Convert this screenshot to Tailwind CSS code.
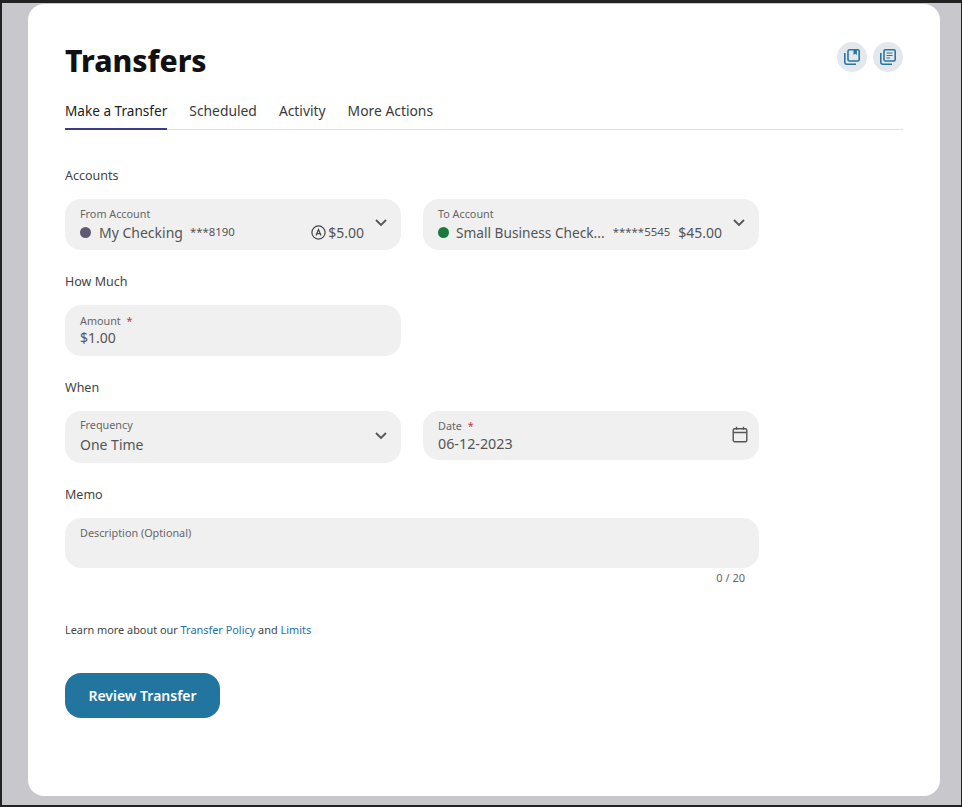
<!DOCTYPE html>
<html lang="en">
<head>
    <meta charset="UTF-8">
    <meta name="viewport" content="width=device-width, initial-scale=1.0">
    <title>Transfers</title>
    <script src="https://cdn.jsdelivr.net/npm/@tailwindcss/browser@4"></script>
</head>
<body class="bg-[#c8c8cc]">
    <div class="w-[962px] h-[807px] overflow-hidden border-t-[3px] border-l-2 border-r border-b-2 border-[#222] font-['Noto_Sans','Open_Sans',sans-serif] text-[#444]">
        <!-- Card -->
        <main class="ml-[26px] mt-[1px] w-[912px] h-[792px] bg-white rounded-[16px] pl-[37px] pr-[37px]">
            <!-- Header -->
            <header class="flex items-start justify-between h-[88px] pt-[37px]">
                <h1 class="text-[30px] leading-[40px] font-extrabold text-[#111]">Transfers</h1>
                <div class="flex gap-[6px] mt-[1px]">
                    <button class="w-[30px] h-[30px] rounded-full bg-[#e3e8ec] flex items-center justify-center text-[#2a769f]">
                        <svg class="w-[18px] h-[18px]" viewBox="0 0 18 18" fill="none" stroke="currentColor" stroke-width="1.6">
                            <rect x="5" y="1.8" width="11.2" height="11.2" rx="1.4"/>
                            <path d="M1.8 5v9.2a2 2 0 0 0 2 2H13"/>
                            <path d="M10.5 2v5l1.7-1.2L13.9 7V2z" fill="currentColor" stroke="none"/>
                        </svg>
                    </button>
                    <button class="w-[30px] h-[30px] rounded-full bg-[#e3e8ec] flex items-center justify-center text-[#2a769f]">
                        <svg class="w-[18px] h-[18px]" viewBox="0 0 18 18" fill="none" stroke="currentColor" stroke-width="1.6">
                            <rect x="5" y="1.8" width="11.2" height="11.2" rx="1.4"/>
                            <path d="M1.8 5v9.2a2 2 0 0 0 2 2H13"/>
                            <path d="M7.5 5h6M7.5 7.5h6M7.5 10h3.5" stroke-width="1.2"/>
                        </svg>
                    </button>
                </div>
            </header>

            <!-- Tabs -->
            <nav class="flex gap-[22px] h-[38px] border-b border-[#dfe1e4] text-[13.85px] leading-[37px] text-[#3a3a3a]">
                <a class="h-[38px] border-b-2 border-[#3b3a8c] text-[13.6px] text-[#222]">Make a Transfer</a>
                <a>Scheduled</a>
                <a>Activity</a>
                <a>More Actions</a>
            </nav>

            <form class="w-[694px]">
                <h2 class="mt-[36px] h-[20px] text-[12.5px] leading-[20px]">Accounts</h2>
                <div class="mt-[13px] grid grid-cols-2 gap-[22px]">
                    <div class="relative h-[51px] rounded-[16px] bg-[#f0f0f0] pl-[15px] pr-[37px] pt-[8px]">
                        <div class="text-[10.8px] leading-[14px] text-[#666]">From Account</div>
                        <div class="flex items-center h-[22px] text-[14px] text-[#555]">
                            <span class="w-[11px] h-[11px] rounded-full bg-[#5f5a72] mr-[8px]"></span>
                            <span>My Checking</span>
                            <span class="ml-[7px] text-[11.4px]">***8190</span>
                            <svg class="ml-auto mr-[2px] w-[15px] h-[15px]" viewBox="0 0 15 15" fill="none" stroke="#444" stroke-width="1.2">
                                <circle cx="7.5" cy="7.5" r="6.6"/>
                                <path d="M5 10.5l2.5-6 2.5 6M5.9 8.6h3.2"/>
                            </svg>
                            <span>$5.00</span>
                        </div>
                        <svg class="absolute right-[13px] top-[19px] w-[14px] h-[10px]" viewBox="0 0 14 10" fill="none" stroke="#555" stroke-width="1.8"><path d="M2 2l5 5 5-5"/></svg>
                    </div>
                    <div class="relative h-[51px] rounded-[16px] bg-[#f0f0f0] pl-[15px] pr-[37px] pt-[8px]">
                        <div class="text-[10.8px] leading-[14px] text-[#666]">To Account</div>
                        <div class="flex items-center h-[22px] text-[14px] text-[#555]">
                            <span class="w-[11px] h-[11px] rounded-full bg-[#1a7a3e] mr-[7px]"></span>
                            <span class="mt-[2px] text-[13.7px]">Small Business Check...</span>
                            <span class="ml-auto text-[11.4px]">*****5545</span>
                            <span class="ml-[8px]">$45.00</span>
                        </div>
                        <svg class="absolute right-[13px] top-[19px] w-[14px] h-[10px]" viewBox="0 0 14 10" fill="none" stroke="#555" stroke-width="1.8"><path d="M2 2l5 5 5-5"/></svg>
                    </div>
                </div>

                <h2 class="mt-[22px] h-[20px] text-[12.5px] leading-[20px]">How Much</h2>
                <div class="mt-[13px] w-[336px] h-[51px] rounded-[16px] bg-[#f0f0f0] pl-[15px] pt-[9px]">
                    <div class="text-[10.8px] leading-[14px] text-[#666]">Amount <span class="ml-[3px] text-[#c8324b]">*</span></div>
                    <div class="h-[20px] text-[14px] leading-[20px] text-[#555]">$1.00</div>
                </div>

                <h2 class="mt-[22px] h-[20px] text-[12.5px] leading-[20px]">When</h2>
                <div class="mt-[13px] grid grid-cols-2 gap-[22px] items-start">
                    <div class="relative h-[52px] rounded-[16px] bg-[#f0f0f0] pl-[15px] pt-[7px]">
                        <div class="text-[10.8px] leading-[14px] text-[#666]">Frequency</div>
                        <div class="mt-[1px] h-[24px] text-[14px] leading-[24px] text-[#555]">One Time</div>
                        <svg class="absolute right-[13px] top-[20px] w-[14px] h-[10px]" viewBox="0 0 14 10" fill="none" stroke="#555" stroke-width="1.8"><path d="M2 2l5 5 5-5"/></svg>
                    </div>
                    <div class="relative h-[49px] rounded-[16px] bg-[#f0f0f0] pl-[15px] pt-[8px]">
                        <div class="text-[10.8px] leading-[14px] text-[#666]">Date <span class="ml-[3px] text-[#c8324b]">*</span></div>
                        <div class="h-[22px] text-[14.3px] leading-[22px] text-[#555]">06-12-2023</div>
                        <svg class="absolute right-[11px] top-[15px] w-[16px] h-[17px]" viewBox="0 0 16 17" fill="none" stroke="#555" stroke-width="1.4">
                            <rect x="1.2" y="2.7" width="13.6" height="13" rx="1.5"/>
                            <path d="M1.2 6.5h13.6M4.5 .8v3M11.5 .8v3"/>
                        </svg>
                    </div>
                </div>

                <h2 class="mt-[22px] h-[20px] text-[12.5px] leading-[20px]">Memo</h2>
                <div class="mt-[13px] h-[50px] rounded-[16px] bg-[#f0f0f0] pl-[15px] pt-[8px]">
                    <div class="text-[10.8px] leading-[14px] text-[#666]">Description (Optional)</div>
                </div>
                <div class="mt-[3px] pr-[14px] text-right text-[11px] leading-[14px] text-[#666]">0 / 20</div>

                <p class="mt-[37px] h-[16px] text-[10.9px] leading-[16px]">Learn more about our <a class="text-[#1f6fa8]">Transfer Policy</a> and <a class="text-[#1f6fa8]">Limits</a></p>

                <button type="button" class="mt-[35px] w-[155px] h-[45px] rounded-[16px] bg-[#22759f] text-white text-[14px] font-semibold">Review Transfer</button>
            </form>
        </main>
    </div>
</body>
</html>
